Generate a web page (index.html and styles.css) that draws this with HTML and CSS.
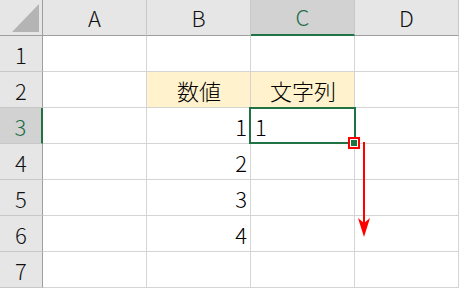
FILE: index.html
```html
<!DOCTYPE html>
<html lang="ja">
<head>
  <meta charset="UTF-8" />
  <meta name="viewport" content="width=device-width, initial-scale=1.0" />
  <title>オートフィル</title>
  <link rel="stylesheet" href="styles.css">
</head>
<body>
  <div class="sheet">
    <div class="grid">
      <div class="hd corner"><div class="corner-tri"></div></div>
      <div class="hd col">A</div>
      <div class="hd col">B</div>
      <div class="hd col active-col">C</div>
      <div class="hd col">D</div>

      <div class="hd row">1</div>
      <div class="cell"></div>
      <div class="cell"></div>
      <div class="cell"></div>
      <div class="cell"></div>

      <div class="hd row">2</div>
      <div class="cell"></div>
      <div class="cell title">数値</div>
      <div class="cell title">文字列</div>
      <div class="cell"></div>

      <div class="hd row active-row">3</div>
      <div class="cell"></div>
      <div class="cell num">1</div>
      <div class="cell text">1</div>
      <div class="cell"></div>

      <div class="hd row">4</div>
      <div class="cell"></div>
      <div class="cell num">2</div>
      <div class="cell"></div>
      <div class="cell"></div>

      <div class="hd row">5</div>
      <div class="cell"></div>
      <div class="cell num">3</div>
      <div class="cell"></div>
      <div class="cell"></div>

      <div class="hd row">6</div>
      <div class="cell"></div>
      <div class="cell num">4</div>
      <div class="cell"></div>
      <div class="cell"></div>

      <div class="hd row">7</div>
      <div class="cell"></div>
      <div class="cell"></div>
      <div class="cell"></div>
      <div class="cell"></div>
    </div>

    <!-- active cell C3 and its fill handle -->
    <div class="selection"></div>
    <div class="handle-mark"><div class="handle"></div></div>

    <!-- drag direction -->
    <svg class="drag-arrow" width="20" height="110" viewBox="0 0 20 110">
      <line x1="10" y1="0" x2="10" y2="84" stroke="#ff0000" stroke-width="2" />
      <path d="M4 76 L10 95 L16 76 L10 81 Z" fill="#ff0000" />
    </svg>
  </div>
</body>
</html>
```

FILE: styles.css
```css
* {
  box-sizing: border-box;
}

body {
  margin: 0;
  background: #fff;
  font-family: "Noto Sans CJK JP", "Noto Sans", sans-serif;
  font-weight: 300;
  color: #000;
}

.sheet {
  position: relative;
  width: 459px;
  height: 288px;
  overflow: hidden;
}

.grid {
  display: grid;
  grid-template-columns: 43px repeat(4, 104px);
  grid-template-rows: repeat(8, 36px);
  line-height: 1;
}

.cell {
  border-right: 1px solid #d4d4d4;
  border-bottom: 1px solid #d4d4d4;
  display: flex;
  align-items: center;
  font-size: 22px;
  padding: 1px 3px 0 4px;
}

.hd {
  background: #e6e6e6;
  display: flex;
  align-items: center;
  justify-content: center;
  font-size: 22px;
  color: #111;
}

.col {
  border-right: 1px solid #c8c8c8;
  border-bottom: 1px solid #9e9e9e;
  padding-bottom: 2px;
}

.row {
  border-right: 1px solid #9e9e9e;
  border-bottom: 1px solid #c8c8c8;
}

.corner {
  border-right: 1px solid #9e9e9e;
  border-bottom: 1px solid #9e9e9e;
  align-items: flex-end;
  justify-content: flex-end;
  padding: 0 3px 3px 0;
}

.corner-tri {
  width: 27px;
  height: 28px;
  background: #b4b4b4;
  clip-path: polygon(100% 0, 100% 100%, 0 100%);
}

.active-col {
  background: #d2d2d2;
  color: #1f6d48;
  border-bottom: 2px solid #217346;
}

.active-row {
  background: #d2d2d2;
  color: #1f6d48;
  border-right: 2px solid #217346;
}

.title {
  background: #fff2cc;
  justify-content: center;
}

.num {
  justify-content: flex-end;
}

.text {
  justify-content: flex-start;
}

.selection {
  position: absolute;
  left: 249px;
  top: 107px;
  width: 107px;
  height: 37px;
  border: 2px solid #217346;
}

.handle-mark {
  position: absolute;
  left: 348px;
  top: 137px;
  width: 12px;
  height: 12px;
  border: 2px solid #ff0000;
  background: #fff;
  padding: 1px;
}

.handle {
  width: 6px;
  height: 6px;
  background: #217346;
}

.drag-arrow {
  position: absolute;
  left: 354px;
  top: 142px;
}
```
